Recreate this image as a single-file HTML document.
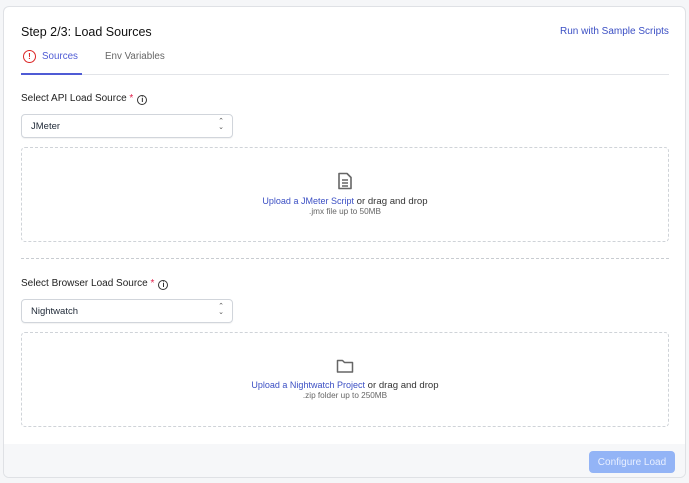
<!DOCTYPE html><html><head><style>
*{box-sizing:border-box;margin:0;padding:0}
body{width:689px;height:483px;background:#f5f6f8;font-family:"Liberation Sans",sans-serif;color:#1f2937;position:relative;overflow:hidden}
.card{position:absolute;left:3px;top:6px;width:683px;height:472px;background:#fff;border:1px solid #dfe1e5;border-radius:6px;overflow:hidden}
.a{position:absolute}
.lbl{font-size:10px;color:#222}
.lbl .s{color:#e11d48}
.sel{width:212px;height:24px;border:1px solid #d1d5db;border-radius:4px;font-size:9.5px;padding:6px 9px;box-shadow:0 1px 1px rgba(0,0,0,.05)}
.dz{width:648px;height:95px;border:1px dashed #cfd3d8;border-radius:4px;text-align:center}
.up{font-size:9.6px;color:#333;line-height:11px}
.up b{font-weight:normal;color:#3b4fc4;font-size:9px}
.sm{font-size:8.2px;color:#666;margin-top:0px}
.info{display:inline-block;width:10px;height:10px;border:1px solid #333;border-radius:50%;font-size:7px;text-align:center;line-height:9px;font-weight:bold;vertical-align:-1px;margin-left:4px}
</style></head><body>
<div class="card">
<div class="a" style="left:17px;top:18px;font-size:12.5px;color:#111">Step 2/3: Load Sources</div>
<div class="a" style="left:556px;top:19px;font-size:10px;color:#3b4fc4">Run with Sample Scripts</div>
<div class="a" style="left:19px;top:43px;width:13px;height:13px;border:1.3px solid #dc2626;border-radius:50%;color:#dc2626;font-size:8px;text-align:center;line-height:11px;font-weight:bold">!</div>
<div class="a" style="left:38px;top:44px;font-size:9.8px;color:#4f5bd5">Sources</div>
<div class="a" style="left:101px;top:44px;font-size:9.8px;color:#666">Env Variables</div>
<div class="a" style="left:17px;top:67px;width:648px;height:1px;background:#e2e4e8"></div>
<div class="a" style="left:17px;top:66px;width:61px;height:2px;background:#4f5bd5"></div>
<div class="a lbl" style="left:17px;top:86px">Select API Load Source <span class="s">*</span><span class="info">i</span></div>
<div class="a sel" style="left:17px;top:107px">JMeter<span style="position:absolute;right:8px;top:4px;font-size:7px;line-height:6px;color:#555">⌃<br>⌄</span></div>
<div class="a dz" style="left:17px;top:140px">
<svg style="margin-top:24px" width="16" height="18" viewBox="0 0 16 18"><path d="M2 1.5h8l4 4v11H2z" fill="none" stroke="#666" stroke-width="1.6" stroke-linejoin="round"/><path d="M5 8h6M5 11h6M5 14h6" stroke="#666" stroke-width="1.4"/></svg>
<div class="up" style="margin-top:1px"><b>Upload a JMeter Script</b> or drag and drop</div><div class="sm">.jmx file up to 50MB</div></div>
<div class="a" style="left:17px;top:251px;width:648px;border-top:1.5px dashed #c8ccd1"></div>
<div class="a lbl" style="left:17px;top:271px">Select Browser Load Source <span class="s">*</span><span class="info">i</span></div>
<div class="a sel" style="left:17px;top:292px">Nightwatch<span style="position:absolute;right:8px;top:4px;font-size:7px;line-height:6px;color:#555">⌃<br>⌄</span></div>
<div class="a dz" style="left:17px;top:325px">
<svg style="margin-top:25px" width="18" height="16" viewBox="0 0 18 16"><path d="M1.5 2.5h5l2 2h8v9.5h-15z" fill="none" stroke="#666" stroke-width="1.5" stroke-linejoin="round"/></svg>
<div class="up" style="margin-top:1px"><b>Upload a Nightwatch Project</b> or drag and drop</div><div class="sm">.zip folder up to 250MB</div></div>
<div class="a" style="left:0;top:437px;width:683px;height:35px;background:#f6f7f9"></div>
<div class="a" style="left:585px;top:444px;width:86px;height:22px;background:#93b4f6;border-radius:4px;color:#e8efff;font-size:10px;display:flex;align-items:center;justify-content:center">Configure Load</div>
</div>
</body></html>
